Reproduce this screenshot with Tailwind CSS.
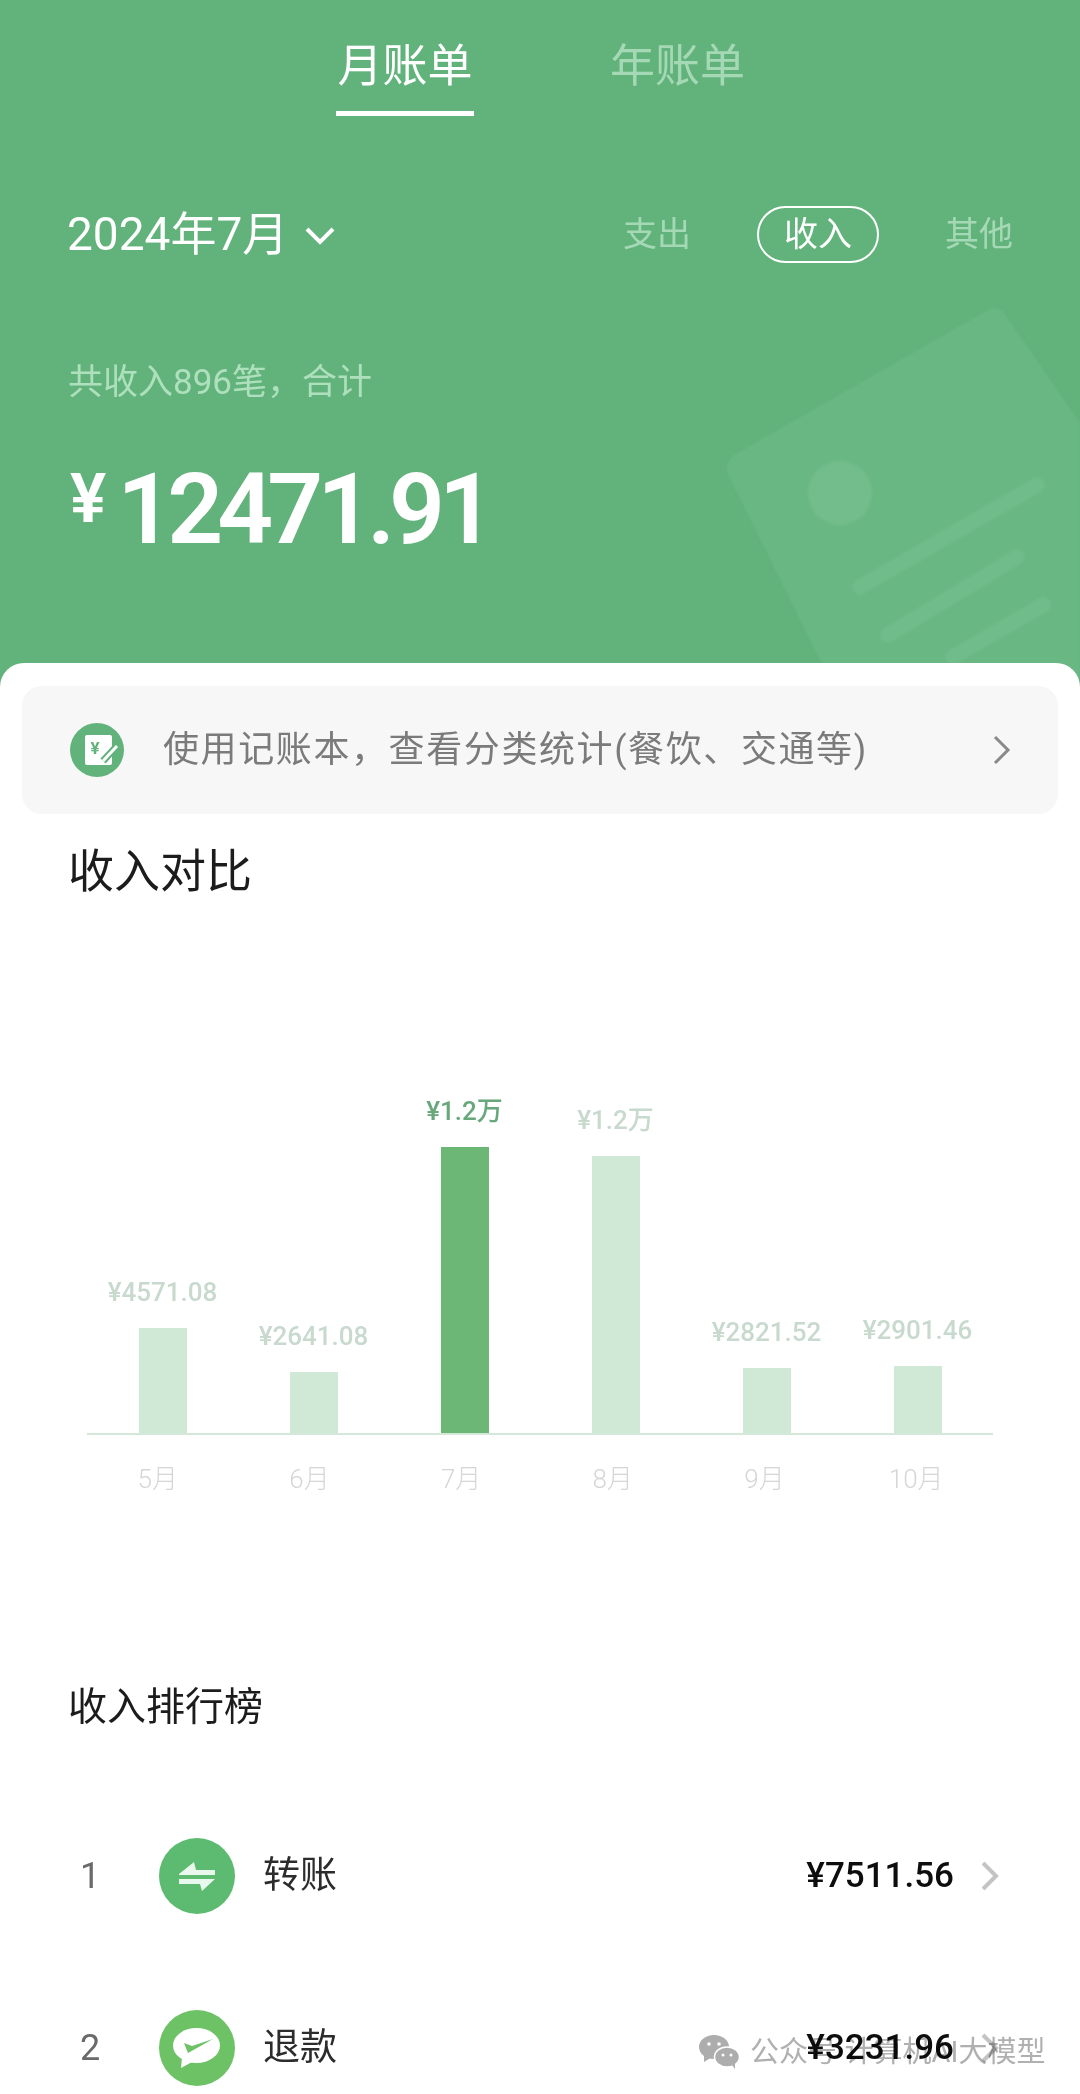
<!DOCTYPE html>
<html lang="zh-CN">

<head>
    <meta charset="UTF-8">
    <meta name="viewport" content="width=device-width, initial-scale=1.0">
    <title>月账单</title>
    <script src="https://cdn.jsdelivr.net/npm/@tailwindcss/browser@4"></script>
</head>

<body class="font-['Roboto','Noto_Sans_CJK_SC',sans-serif]">
    <div class="relative w-[1080px] h-[2094px] overflow-hidden bg-[#62b27b]">

        <!-- header decoration -->
        <svg class="absolute left-[700px] top-[280px] blur-[1px]" width="380" height="400" viewBox="0 0 380 400" fill="none">
            <path d="M36 174 L288 30 Q298 24 306 36 L380 143 L380 400 L130 400 L28 194 Q24 182 36 174 Z" fill="#69b884" />
            <circle cx="140" cy="213" r="32" fill="#73bc8c" />
            <path d="M160 307 L337 205 M188 355 L317 277 M253 377 L343 325" stroke="#71bc8b" stroke-width="15" stroke-linecap="round" />
        </svg>

        <!-- tabs -->
        <div class="relative flex justify-center gap-[136px] pt-[43px] pl-[1px] text-[45px] leading-[48px]">
            <div class="flex flex-col items-center text-white">
                <span>月账单</span>
                <span class="mt-[20px] w-[138px] h-[5px] bg-white"></span>
            </div>
            <span class="text-[#a5d9b5]">年账单</span>
        </div>

        <!-- month + type filter -->
        <div class="relative flex items-center justify-between mt-[90px] pl-[67px] pr-[67px] h-[57px]">
            <div class="flex items-center gap-[17px] text-white text-[46px]">
                <span>2024年7月</span>
                <svg width="30" height="20" viewBox="0 0 30 20" fill="none" class="mt-[2px]">
                    <path d="M2 3 L15 16 L28 3" stroke="#fff" stroke-width="4" />
                </svg>
            </div>
            <div class="flex items-center text-[34px] text-[#a5d9b5]">
                <span>支出</span>
                <span class="ml-[66px] w-[122px] h-[57px] flex items-center justify-center rounded-full border-2 border-white text-white">收入</span>
                <span class="ml-[66px]">其他</span>
            </div>
        </div>

        <!-- total -->
        <div class="relative mt-[100px] pl-[68px] text-[35px] leading-[40px] text-[#aee0bd]">共收入896笔，合计</div>
        <div class="relative flex items-start mt-[58px] pl-[70px] text-white font-semibold">
            <span class="text-[68px] leading-[68px] mt-[4px] mr-[11px]">¥</span>
            <span class="text-[98px] leading-[98px] tracking-[-6px]">12471.91</span>
        </div>

        <!-- white sheet -->
        <div class="absolute left-0 right-0 top-[663px] bottom-0 bg-white rounded-t-[24px] pt-[23px]">
            <div class="mx-[22px] h-[128px] flex items-center rounded-[20px] bg-[#f7f7f7] pl-[48px] pr-[46px]">
                <svg width="54" height="54" viewBox="0 0 54 54" class="shrink-0">
                    <circle cx="27" cy="27" r="27" fill="#62b27b" />
                    <rect x="15" y="12" width="27" height="30" rx="2" fill="#fff" />
                    <text x="25" y="31" font-size="17" font-weight="700" text-anchor="middle" fill="#62b27b" font-family="Roboto">¥</text>
                    <path d="M33 38 L48 22" stroke="#62b27b" stroke-width="7" />
                    <path d="M33 38 L47 23" stroke="#fff" stroke-width="3" />
                </svg>
                <span class="ml-[39px] text-[36px] tracking-[1.6px] text-[#7b7b7b] whitespace-nowrap">使用记账本，查看分类统计(餐饮、交通等)</span>
                <svg width="20" height="32" viewBox="0 0 20 32" fill="none" class="ml-auto">
                    <path d="M3 3 L16 16 L3 29" stroke="#8a8a8a" stroke-width="3" />
                </svg>
            </div>

            <h2 class="mt-[31px] pl-[68px] text-[46px] leading-[52px] text-[#1c1c1c]">收入对比</h2>

            <!-- bar chart -->
            <div class="mt-[184px] mx-[87px] grid grid-cols-6 h-[354px] items-end border-b-2 border-[#d4e8da]">
                <div class="flex flex-col items-center">
                    <span class="text-[26px] leading-[32px] font-medium text-[#c8d9ce] whitespace-nowrap mb-[20px]">¥4571.08</span>
                    <div class="w-[48px] h-[105px] bg-[#d0e8d6]"></div>
                </div>
                <div class="flex flex-col items-center">
                    <span class="text-[26px] leading-[32px] font-medium text-[#c8d9ce] whitespace-nowrap mb-[20px]">¥2641.08</span>
                    <div class="w-[48px] h-[61px] bg-[#d0e8d6]"></div>
                </div>
                <div class="flex flex-col items-center">
                    <span class="text-[26px] leading-[32px] font-medium text-[#68a87c] whitespace-nowrap mb-[20px]">¥1.2万</span>
                    <div class="w-[48px] h-[286px] bg-[#6cb776]"></div>
                </div>
                <div class="flex flex-col items-center">
                    <span class="text-[26px] leading-[32px] font-medium text-[#c8d9ce] whitespace-nowrap mb-[20px]">¥1.2万</span>
                    <div class="w-[48px] h-[277px] bg-[#d0e8d6]"></div>
                </div>
                <div class="flex flex-col items-center">
                    <span class="text-[26px] leading-[32px] font-medium text-[#c8d9ce] whitespace-nowrap mb-[20px]">¥2821.52</span>
                    <div class="w-[48px] h-[65px] bg-[#d0e8d6]"></div>
                </div>
                <div class="flex flex-col items-center">
                    <span class="text-[26px] leading-[32px] font-medium text-[#c8d9ce] whitespace-nowrap mb-[20px]">¥2901.46</span>
                    <div class="w-[48px] h-[67px] bg-[#d0e8d6]"></div>
                </div>
            </div>
            <div class="ml-[82px] mr-[88px] mt-[28px] grid grid-cols-6 text-center text-[26px] leading-[32px] font-light text-[#d6d6d6]">
                <span>5月</span>
                <span>6月</span>
                <span>7月</span>
                <span>8月</span>
                <span>9月</span>
                <span>10月</span>
            </div>

            <h2 class="mt-[187px] pl-[68px] text-[39px] leading-[50px] text-[#1c1c1c]">收入排行榜</h2>

            <!-- ranking -->
            <div class="mt-[106px] flex flex-col gap-[96px]">
                <div class="flex items-center h-[76px] pl-[80px] pr-[80px]">
                    <span class="w-[79px] text-[36px] text-[#6a6a6a]">1</span>
                    <svg width="76" height="76" viewBox="0 0 76 76" class="shrink-0">
                        <circle cx="38" cy="38" r="38" fill="#5cbb70" />
                        <path d="M20 36 L35 24 L37 32 H56 V37 H20 Z" fill="#e9f8ec" />
                        <path d="M20 41 H56 L43 53 L41 46 H20 Z" fill="#e9f8ec" />
                    </svg>
                    <span class="ml-[28px] text-[37px] text-[#2c2c2c]">转账</span>
                    <span class="ml-auto text-[35px] font-medium text-[#0d0d0d]">¥7511.56</span>
                    <svg width="20" height="32" viewBox="0 0 20 32" fill="none" class="ml-[26px]">
                        <path d="M3 3 L16 16 L3 29" stroke="#c4c4c4" stroke-width="4" />
                    </svg>
                </div>
                <div class="flex items-center h-[76px] pl-[80px] pr-[80px]">
                    <span class="w-[79px] text-[36px] text-[#6a6a6a]">2</span>
                    <svg width="76" height="76" viewBox="0 0 76 76" class="shrink-0">
                        <circle cx="38" cy="38" r="38" fill="#6cc264" />
                        <ellipse cx="37.5" cy="35.5" rx="23.5" ry="17.5" fill="#fff" />
                        <path d="M23 47 L22 58 L33 52 Z" fill="#fff" />
                        <path d="M25 33 L29 43 L54 29 L33 36 Z" fill="#6cc264" />
                    </svg>
                    <span class="ml-[28px] text-[37px] text-[#2c2c2c]">退款</span>
                    <span class="ml-auto text-[35px] font-medium text-[#0d0d0d]">¥3231.96</span>
                    <svg width="20" height="32" viewBox="0 0 20 32" fill="none" class="ml-[26px]">
                        <path d="M3 3 L16 16 L3 29" stroke="#c4c4c4" stroke-width="4" />
                    </svg>
                </div>
            </div>
        </div>

        <!-- watermark -->
        <div class="absolute left-[698px] top-[2032px] flex items-center gap-[10px] text-[29px] leading-[40px] text-[#b0b0b0] mix-blend-multiply">
            <svg width="42" height="34" viewBox="0 0 42 34" fill="#adadad">
                <ellipse cx="16" cy="12" rx="15" ry="12" />
                <path d="M6 20 L6 27 L14 22 Z" />
                <ellipse cx="29" cy="22" rx="12.5" ry="10" stroke="#fff" stroke-width="1.5" />
                <path d="M34 30 L37 34 L37 28 Z" />
                <circle cx="11" cy="9" r="1.8" fill="#fff" />
                <circle cx="21" cy="9" r="1.8" fill="#fff" />
                <circle cx="25" cy="20" r="1.5" fill="#fff" />
                <circle cx="33" cy="20" r="1.5" fill="#fff" />
            </svg>
            <span class="whitespace-nowrap">公众号·计算机AI大模型</span>
        </div>
    </div>
</body>

</html>
